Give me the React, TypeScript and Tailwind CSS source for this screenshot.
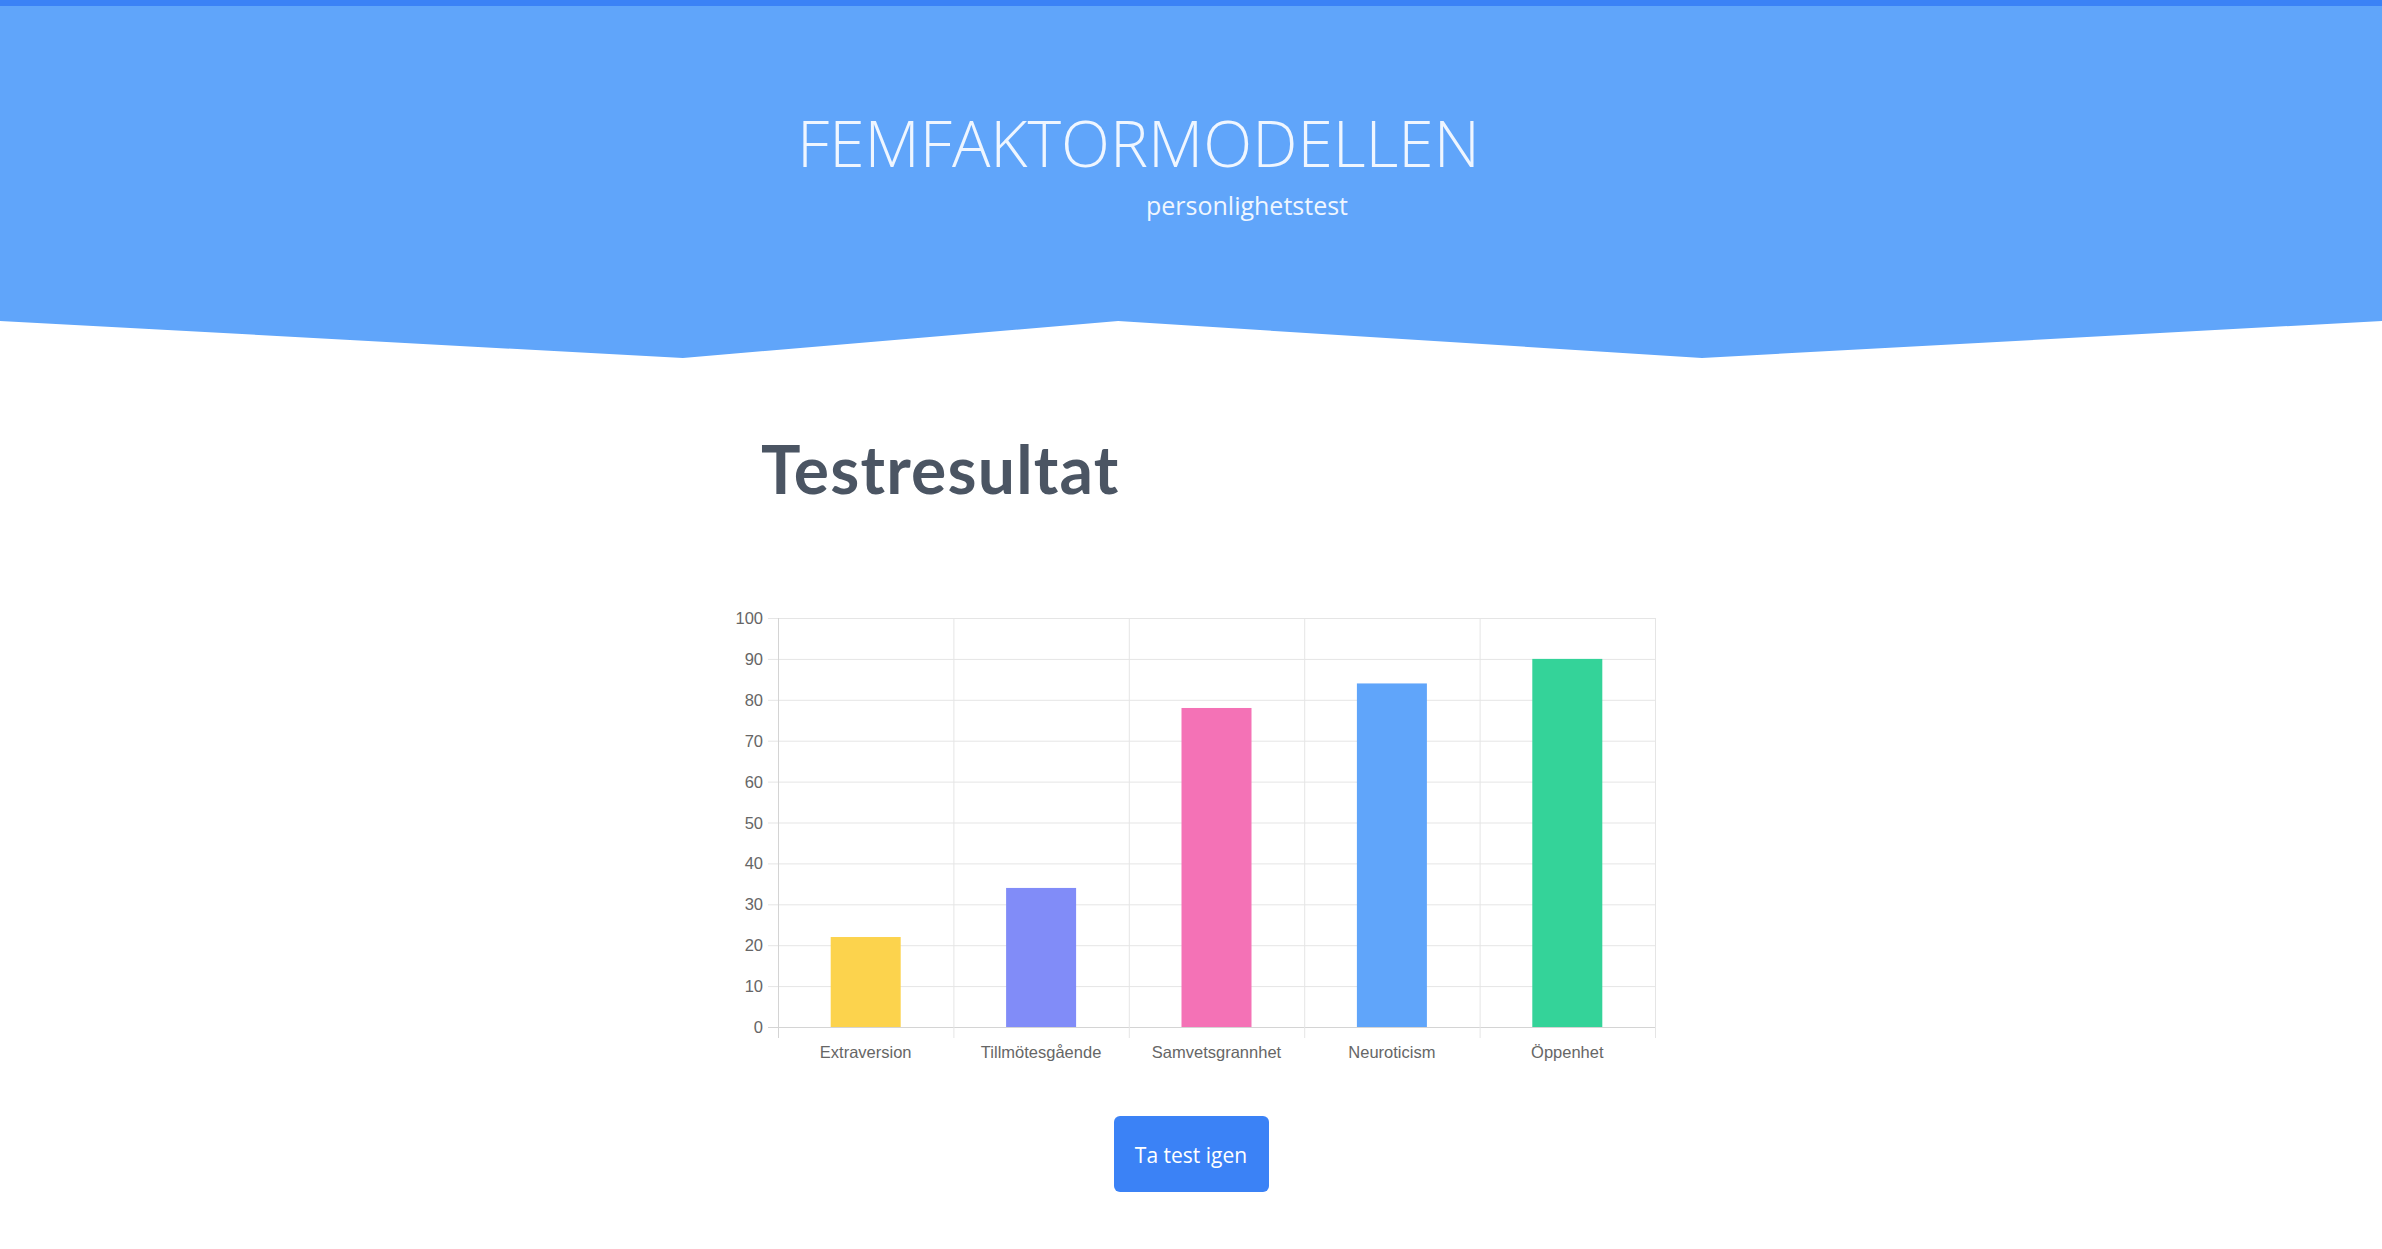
import React from 'react';

type Trait = {
  name: string;
  value: number;
  color: string;
};

const results: Trait[] = [
  { name: 'Extraversion', value: 22, color: '#fcd34d' },
  { name: 'Tillmötesgående', value: 34, color: '#818cf8' },
  { name: 'Samvetsgrannhet', value: 78, color: '#f472b6' },
  { name: 'Neuroticism', value: 84, color: '#60a5fa' },
  { name: 'Öppenhet', value: 90, color: '#34d399' },
];

// stapeldiagram, ritat som svg
const ResultChart = ({ data }: { data: Trait[] }) => {
  const left = 67;
  const right = 944;
  const top = 19;
  const bottom = 428;
  const colW = (right - left) / data.length;
  const yFor = (v: number) => bottom - ((bottom - top) * v) / 100;
  const ticks = [0, 10, 20, 30, 40, 50, 60, 70, 80, 90, 100];

  return (
    <svg width="960" height="480" viewBox="0 0 960 480" className="block">
      {ticks.map((t) => (
        <g key={t}>
          <line
            x1={left - 10}
            x2={right}
            y1={yFor(t) + 0.5}
            y2={yFor(t) + 0.5}
            stroke={t === 0 ? '#d4d4d4' : '#e5e5e5'}
            strokeWidth="1"
          />
          <text
            x={52}
            y={yFor(t) + 6}
            textAnchor="end"
            fontSize="16.5"
            fill="#666666"
            fontFamily='"Liberation Sans", Arial, sans-serif'
          >
            {t}
          </text>
        </g>
      ))}
      {Array.from({ length: data.length + 1 }).map((_, i) => (
        <line
          key={i}
          x1={left + colW * i + 0.5}
          x2={left + colW * i + 0.5}
          y1={top}
          y2={bottom + 11}
          stroke={i === 0 ? '#d4d4d4' : '#e5e5e5'}
          strokeWidth="1"
        />
      ))}
      {data.map((d, i) => {
        const cx = left + colW * (i + 0.5);
        const y = yFor(d.value);
        return (
          <g key={d.name}>
            <rect x={cx - 35} y={y} width={70} height={bottom - y} fill={d.color} />
            <text
              x={cx}
              y={459}
              textAnchor="middle"
              fontSize="16.5"
              fill="#666666"
              fontFamily='"Liberation Sans", Arial, sans-serif'
            >
              {d.name}
            </text>
          </g>
        );
      })}
    </svg>
  );
};

export default function App() {
  return (
    <div className="min-h-screen bg-white font-['Open_Sans',_'Noto_Sans',_sans-serif]">
      <header className="h-[358px] border-t-[6px] border-[#3b82f6] bg-[#60a5fa] [clip-path:polygon(0_0,100%_0,100%_321px,71.45%_100%,46.94%_321px,28.67%_100%,0_321px)]">
        <div className="mx-auto w-[860px] pt-[105px]">
          <h1 className="pl-[36px] text-[64px] leading-none font-light text-[#eff6ff] whitespace-nowrap">
            FEMFAKTORMODELLEN
          </h1>
          <p className="mt-[18px] pl-[385px] text-[25px] leading-none text-[#eff6ff]">
            personlighetstest
          </p>
        </div>
      </header>

      <main className="flex flex-col items-center">
        <div className="w-[860px] pt-[78px]">
          <h2 className="font-['Lato',_sans-serif] text-[66px] leading-none font-bold tracking-[1.2px] text-[#4b5563]">
            Testresultat
          </h2>
        </div>

        <div className="mt-[97px]">
          <ResultChart data={results} />
        </div>

        <button className="mt-[37px] h-[76px] w-[155px] rounded-md bg-[#3b82f6] pt-[4px] text-[21px] text-white">
          Ta test igen
        </button>
      </main>
    </div>
  );
}
